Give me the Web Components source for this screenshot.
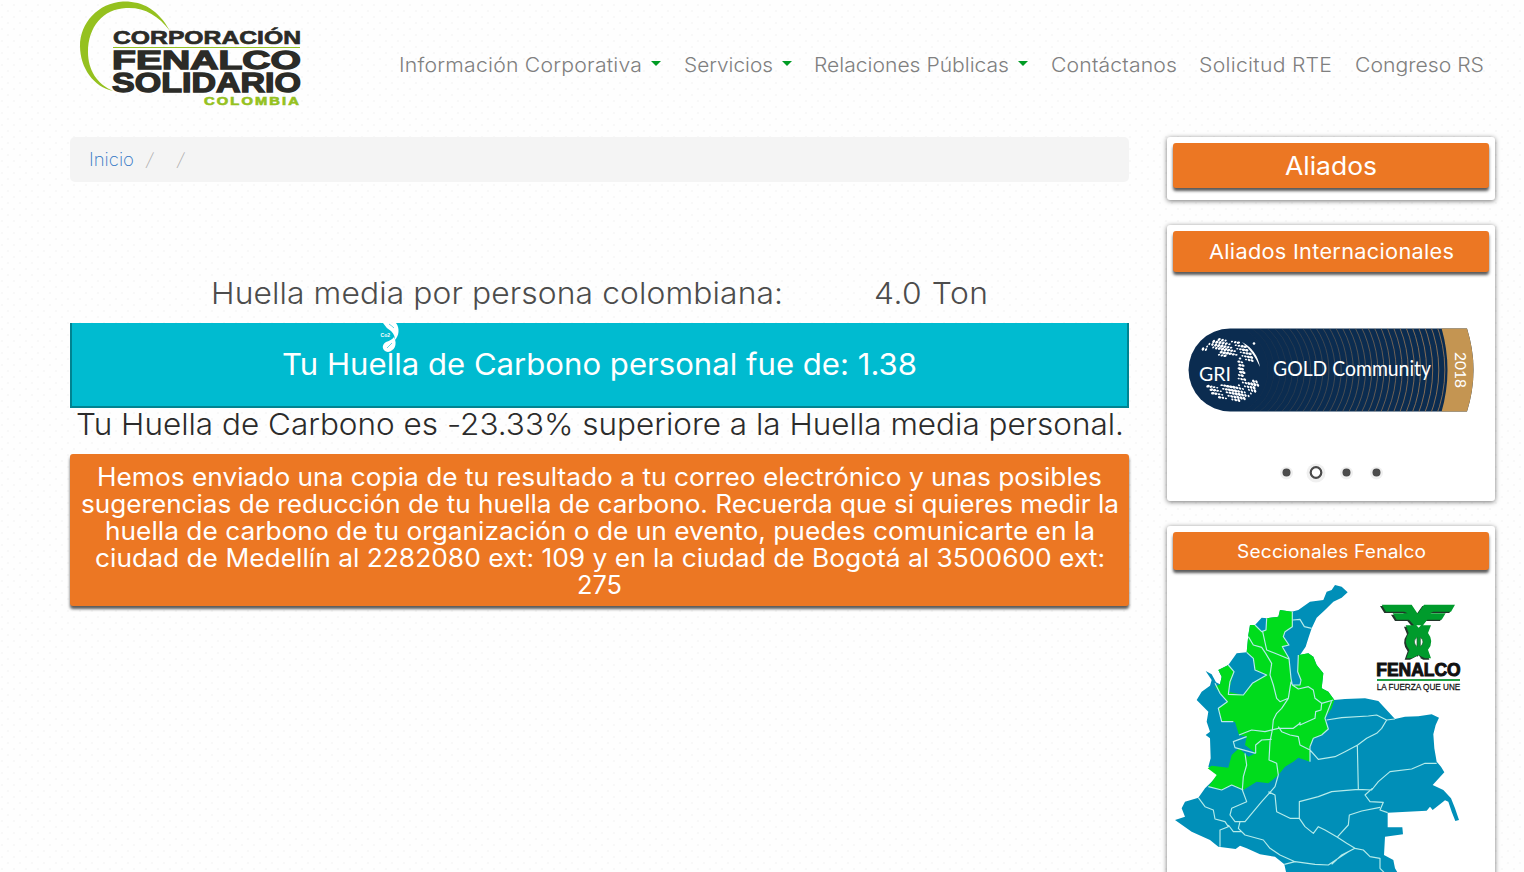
<!DOCTYPE html>
<html lang="es">
<head>
<meta charset="utf-8">
<title>Corporación Fenalco Solidario</title>
<style>
html,body{margin:0;height:872px;overflow:hidden}
body{background-color:#fefefe;background-image:radial-gradient(circle,#f8f8f8 0 .8px,transparent 1.6px),radial-gradient(circle,#f8f8f8 0 .8px,transparent 1.6px);background-size:12px 12px;background-position:-4px -1px,2px 5px;font-family:Inter,"Open Sans",sans-serif;font-weight:300;color:#333}
</style>
</head>
<body>
<fs-page>
  <fs-header slot="header"></fs-header>
  <fs-breadcrumb slot="main"></fs-breadcrumb>
  <fs-result slot="main"></fs-result>
  <fs-card slot="side" size="25" bar="45">
    <fit-text slot="title" w="92">Aliados</fit-text>
    <div style="height:6px"></div>
  </fs-card>
  <fs-card slot="side" size="20.5" bar="41">
    <fit-text slot="title" w="245">Aliados Internacionales</fit-text>
    <fs-slider></fs-slider>
  </fs-card>
  <fs-card slot="side" size="18" bar="38">
    <fit-text slot="title" w="189">Seccionales Fenalco</fit-text>
    <fs-map></fs-map>
  </fs-card>
</fs-page>
<script>
const define = (name, html, init) => customElements.define(name, class extends HTMLElement {
  connectedCallback() {
    if (this.shadowRoot) return;
    const root = this.attachShadow({mode: 'open'});
    root.innerHTML = html;
    if (init) init.call(this, root);
  }
});

// Text widened and tracked so that it spans a given measure
define('fit-text', `<style>:host{display:inline-block;white-space:nowrap;text-align:left}span{display:inline-block;transform-origin:0 50%}</style><span><slot></slot></span>`, function (root) {
  const w = +this.getAttribute('w'), s = root.querySelector('span');
  this.adjust = () => {
    s.style.letterSpacing = '0';
    s.style.transform = 'none';
    const n = this.textContent.length, natural = s.getBoundingClientRect().width;
    const k = Math.max(1, Math.min(1.06, w / natural));
    s.style.letterSpacing = ((w / k - natural) / (n - 1)) + 'px';
    s.style.transform = `scaleX(${k})`;
    this.style.width = w + 'px';
  };
  this.adjust();
});

define('fs-logo', `<style>:host{display:block;width:240px;height:120px}svg{display:block}text{font-family:"Liberation Sans",Arial,sans-serif;font-weight:700;fill:#2b2b27;stroke:#2b2b27;stroke-width:.6}.heavy{stroke-width:1.3}.green{fill:#95c11f;stroke:#95c11f;letter-spacing:1.500px}</style>
<svg width="240" height="120" viewBox="0 0 240 120">
<path fill="#95c11f" d="M100 31C88 9 72 1 53 1.500C28 3 10 23 10 46C10 68 24 87 43 91C27 84 18 70 18 52C18 27 33 9 56 8C74 7 88 15 100 31Z"/>
<text x="43" y="44.300" font-size="17.500" textLength="188" lengthAdjust="spacingAndGlyphs">CORPORACIÓN</text>
<text class="heavy" x="42" y="69" font-size="26" textLength="189" lengthAdjust="spacingAndGlyphs">FENALCO</text>
<text class="heavy" x="42" y="92" font-size="27" textLength="189" lengthAdjust="spacingAndGlyphs">SOLIDARIO</text>
<path d="M43 47.500H230" stroke="#95c11f" stroke-width="1.200"/>
<text class="green" x="134" y="105" font-size="10.500" textLength="97" lengthAdjust="spacingAndGlyphs">COLOMBIA</text>
</svg>`);

define('fs-nav-item', `<style>:host{display:flex;align-items:center;color:#808080;font-size:20px}i{display:none;margin-left:9px;border:5px solid transparent;border-top-color:#009b24;border-bottom:0;margin-top:-3px}:host([menu]) i{display:block}</style><slot></slot><i></i>`);

define('fs-header', `<style>:host{display:flex;height:137px;padding-left:70px}nav{display:flex;margin-left:89px;margin-top:53px;height:24px;gap:22.500px}</style>
<fs-logo></fs-logo><nav>
<fs-nav-item menu><fit-text w="243">Información Corporativa</fit-text></fs-nav-item>
<fs-nav-item menu><fit-text w="89">Servicios</fit-text></fs-nav-item>
<fs-nav-item menu><fit-text w="195">Relaciones Públicas</fit-text></fs-nav-item>
<fs-nav-item><fit-text w="126">Contáctanos</fit-text></fs-nav-item>
<fs-nav-item><fit-text w="133">Solicitud RTE</fit-text></fs-nav-item>
<fs-nav-item><fit-text w="129">Congreso RS</fit-text></fs-nav-item>
</nav>`);

define('fs-breadcrumb', `<style>:host{display:flex;align-items:center;box-sizing:border-box;height:45px;background:#f4f4f4;border-radius:5px;padding-left:19px;font-size:18px;font-weight:200;color:#aaa}a{color:#2f74c4}span{margin-left:13px;transform:skewX(-12deg)}span+span{margin-left:25px}</style>
<a><fit-text w="45">Inicio</fit-text></a><span>/</span><span>/</span>`);

define('fs-result', `<style>
:host{display:block;font-size:30px}
.avg{display:flex;margin-top:91px;height:50px;padding-left:141px;gap:91px;line-height:40px;color:#4c4c4c}
.mine{position:relative;box-sizing:border-box;height:85px;background:#00bbd0;border:2px solid #008391;border-top:0;display:flex;align-items:center;justify-content:center;color:#fff;font-weight:400;padding-bottom:2px}
.mine svg{position:absolute;left:302px;top:0}
.diff{height:47px;line-height:34px;margin-top:-1px;padding-left:6px;color:#2b2b2b}
.note{box-sizing:border-box;height:152px;padding-top:10px;display:flex;flex-direction:column;align-items:center;background:#ec7723;border-radius:3px;box-shadow:0 3px 3px rgba(0,0,0,.65);color:#fff;font-size:25px;line-height:27px;font-weight:400}
</style>
<div class="avg"><fit-text w="572">Huella media por persona colombiana:</fit-text><fit-text w="114">4.0 Ton</fit-text></div>
<div class="mine"><svg width="30" height="32" viewBox="0 0 30 32"><path fill="#fff" d="M9 0H22C26 5 25 13 21 17C21 14 20 11 17 8Q12 5 9 0ZM20 14C24 22 20 28 14 29C8 28 7 22 12 19Q18 17 20 14Z"/><path d="M15 1Q18 3 20 5M13 25L18 20" fill="none" stroke="#00bbd0" stroke-width=".6"/><text x="6.500" y="13.800" font-family="Liberation Sans,sans-serif" font-size="5" font-weight="700" fill="#fff" textLength="9.500">Co2</text></svg><fit-text w="635">Tu Huella de Carbono personal fue de: 1.38</fit-text></div>
<div class="diff"><fit-text w="1048">Tu Huella de Carbono es -23.33% superiore a la Huella media personal.</fit-text></div>
<div class="note">
<fit-text w="1005">Hemos enviado una copia de tu resultado a tu correo electrónico y unas posibles</fit-text>
<fit-text w="1038">sugerencias de reducción de tu huella de carbono. Recuerda que si quieres medir la</fit-text>
<fit-text w="990">huella de carbono de tu organización o de un evento, puedes comunicarte en la</fit-text>
<fit-text w="1010">ciudad de Medellín al 2282080 ext: 109 y en la ciudad de Bogotá al 3500600 ext:</fit-text>
<fit-text w="45">275</fit-text>
</div>`);

define('fs-card', `<style>:host{display:block;box-sizing:border-box;width:328px;padding:6px;background:#fff;border-radius:3px;box-shadow:0 1px 5px rgba(0,0,0,.55);overflow:hidden}
.bar{display:flex;align-items:center;justify-content:center;background:#ec7723;border-radius:3px;box-shadow:0 3px 3px rgba(0,0,0,.65);color:#fff;font-weight:400}</style><div class="bar"><slot name="title"></slot></div><slot></slot>`, function (root) {
  const bar = root.querySelector('.bar');
  bar.style.height = this.getAttribute('bar') + 'px';
  bar.style.fontSize = this.getAttribute('size') + 'px';
  this.querySelector('fit-text').adjust?.();
});

define('fs-slider', `<style>:host{display:block;height:223px}svg{display:block}text{font-family:Lato,sans-serif;font-weight:400;fill:#fff}</style>
<svg width="316" height="223" viewBox="1173 272 316 223">
<defs><clipPath id="c"><path d="M1230 328.500H1467Q1480 370 1467 411.500H1230A41.500 41.500 0 0 1 1230 328.500Z"/></clipPath></defs>
<g clip-path="url(#c)"><path fill="#0b2c50" d="M1188 328h300v84h-300z"/><g id="rings" fill="none" stroke="#b98a5a"></g><path fill="#c49552" d="M1441.500 328Q1453.500 370 1441.500 412H1490V328Z"/></g>
<g id="globe" fill="#fff"></g>
<text x="1199" y="381" font-size="19" textLength="32" lengthAdjust="spacingAndGlyphs">GRI</text>
<text x="1273" y="376" font-size="20.500" textLength="158" lengthAdjust="spacingAndGlyphs">GOLD Community</text>
<text transform="translate(1454.500 352) rotate(90)" font-size="14.500" textLength="36" lengthAdjust="spacingAndGlyphs">2018</text>
<g fill="#4b4b4b"><g fill="#f0f0f0"><circle cx="1286.500" cy="473" r="6.500"/><circle cx="1316" cy="473" r="9.500"/><circle cx="1346.500" cy="473" r="6.500"/><circle cx="1376.500" cy="473" r="6.500"/></g><circle cx="1286.500" cy="472.500" r="4"/><circle cx="1346.500" cy="472.500" r="4"/><circle cx="1376.500" cy="472.500" r="4"/><circle cx="1316" cy="472.500" r="5.300" fill="#fff" stroke="#4b4b4b" stroke-width="2.200"/></g>
</svg>`, function (root) {
  let rings = '';
  for (let x = 1268; x < 1445; x += 6.1) {
    const r = 48 + (x - 1270) * .45;
    rings += `<path d="M${x - r} ${370 - r}A${r} ${r} 0 0 1 ${x - r} ${370 + r}" opacity="${Math.min(.7, Math.max(.03, (x - 1260) / 240)).toFixed(2)}"/>`;
  }
  root.querySelector('#rings').innerHTML = rings;
  let dots = '';
  for (let j = -9; j <= 9; j++) for (let i = -9; i <= 9; i++) {
    const u = i / 9.5, v = j / 9.5;
    if (u * u + v * v > 1) continue;
    const h = Math.abs(Math.sin(i * 12.9 + j * 78.2)), g = Math.sin(i * 37.7 + j * 19.3);
    const x = 1229 + 28 * u * (1 + .1 * v * v) + (j % 2) + g, y = 370 + 31 * v + u * 5 + g * .6;
    if (x < 1238 && y > 356 && y < 385 || x > 1245 && y > 362 && y < 381 || x < 1219 && y > 350 && y < 386) continue;
    if (h < .2) continue;
    dots += `<ellipse cx="${x.toFixed(1)}" cy="${y.toFixed(1)}" rx="${(.8 + h * 1.1).toFixed(1)}" ry="${(.6 + h * .7).toFixed(1)}" transform="rotate(${(u * 50 + v * 30).toFixed(0)} ${x} ${y})"/>`;
  }
  root.querySelector('#globe').innerHTML = dots + '<path d="M1242 342Q1257 350 1260 367Q1254 353 1242 342Z"/><circle cx="1254" cy="343.500" r="1.300"/>';
});

define('fs-map', `<style>:host{display:block;height:310px}svg{display:block;margin:5px 0 0 -6px}text{font-family:"Liberation Sans",Arial,sans-serif;fill:#111;stroke:#111}</style>
<svg width="328" height="300" viewBox="6 0 984 900">
<path fill="#008fb8" d="M510 30L530 35 548 52 530 68 505 80 480 105 455 128 440 160 430 190 422 215 405 240 430 235 445 245 455 270 475 295 470 340 490 350 508 375 540 372 600 370 640 378 665 405 690 432 720 425 760 424 800 418 822 428 812 450 805 478 808 520 815 560 828 575 838 592 803 630 835 645 858 670 870 700 882 735 871 738 860 710 850 680 840 676 803 705 795 695 785 707 668 713 668 757 712 757 714 778 660 785 657 840 685 855 690 880 702 900H365L358 868 330 845 285 838 245 820 225 812 212 822 160 815 135 795 80 770 30 735 60 725 50 700 60 680 100 668 120 640 140 620 160 600 150 585 130 575 137 550 135 490 122 480 135 470 125 440 130 410 95 375 110 350 135 332 140 315 122 288 140 298 153 322 165 328 170 305 160 285 190 270 215 235 245 232 250 180 255 150 270 150 290 128 305 130 340 125 345 105 380 110 400 105 435 80 475 75 485 50 500 45Z"/>
<path fill="#00dc1c" d="M305 130L340 125 345 105 382 110 384 155 360 170 355 185 372 210 352 215 372 250 378 310 382 330 405 330 408 315 398 290 400 240 430 235 445 245 455 270 475 295 470 340 490 350 508 375 500 400 480 430 490 462 470 480 445 490 435 515 435 560 400 548 385 560 360 575 340 600 310 625 275 620 235 645 200 630 170 645 130 635 155 600 128 580 140 572 190 578 200 540 222 520 250 545 272 535 240 510 245 485 222 480 210 441 170 440 160 400 187 380 150 335 165 328 170 305 160 285 190 270 207 290 190 350 235 360 262 325 305 300 270 285 265 250 245 232 250 180 255 150 270 150 290 170 303 165Z"/>
<path fill="none" stroke="#b5ebea" stroke-width="3.500" stroke-linejoin="round" d="M382 110V155L360 170 355 185 372 210 352 215 372 250 378 310 382 330 405 330 408 315 398 290 400 240M384 135L405 133 418 155 440 160M305 130L303 165 290 170 270 150M250 185L265 210 290 217 302 235 320 265 315 300 325 330 335 370 345 380 370 370 378 320M293 170L305 225 330 235 372 252M245 232L265 250 270 285 305 300 262 325 235 360 190 358 195 320 207 290 190 270M150 325L165 355 187 380 160 400 170 440 205 440M382 330L400 342 430 335 445 345 450 370 470 385 505 375M470 385L468 405 452 410 450 430 405 450 405 441M370 370L350 400 335 415 325 435 322 465 315 500 312 555 335 565 340 600M500 378L480 430 490 462 470 480 445 490 435 515V560M485 435L530 428 610 423 635 420 665 435 690 432M665 435L650 460 635 475 605 490 578 510 540 530 510 545 460 553 435 525 405 510 400 485 375 480 350 470 340 455M222 480L260 465 300 470 340 460 385 460 405 445M272 535V510L290 495 320 493M245 485L205 500 210 518 272 535M240 535L245 570 235 605 232 645 245 680 200 700 195 720 210 740 240 740 290 680 330 635 340 600M130 635L170 645 200 630 235 645M100 668L120 695 145 705 150 732 180 740 190 755 165 765 165 815M190 750L205 770 230 770M225 740L220 760 240 780 295 795 315 820 345 840 390 860 450 868 490 870 520 850 550 830 570 820 545 805 515 785 480 765 460 755 445 775 420 755 403 730V680L460 665 500 650 580 643 620 645 640 620 675 590 740 582 780 565 815 565M577 510L580 643M310 650L330 660 335 710 375 730 403 730M622 640L600 660 615 680 655 682 645 705 668 713M645 697L590 708 553 720 550 750 518 785M570 820L595 825 615 845 645 850 645 880 665 900M570 820L530 840 500 868M358 868L390 860"/>
<g id="emblem"><g transform="translate(-5 4)" fill="#22352a"><path d="M650 89H740L758 116 777 89H870L858 110H805L795 115H842L830 134H787L774 151H798L789 174Q809 200 789 224L798 250H780L760 240 740 250H724L733 225Q713 200 731 174L722 151H747L732 134H695L683 115H728L718 110H663Z"/></g><path fill="#009b2c" d="M650 89H740L758 116 777 89H870L858 110H805L795 115H842L830 134H787L774 151H798L789 174Q809 200 789 224L798 250H780L760 240 740 250H724L733 225Q713 200 731 174L722 151H747L732 134H695L683 115H728L718 110H663Z"/><path d="M756 187Q740 201 756 215ZM766 187Q782 201 766 215Z" fill="#fff" stroke="#205b31" stroke-width="2"/><path d="M754 151L761 158 768 151ZM754 250L761 241 768 250Z" fill="#fff"/></g>
<text x="634" y="303" font-size="54" font-weight="700" stroke-width="3" textLength="253" lengthAdjust="spacingAndGlyphs">FENALCO</text><path d="M636 315H885" stroke="#20a044" stroke-width="6"/>
<text x="635" y="345" font-size="29" font-weight="400" stroke-width=".8" textLength="251" lengthAdjust="spacingAndGlyphs">LA FUERZA QUE UNE</text>
</svg>`);

define('fs-page', `<style>:host{display:block;width:1524px;height:872px;overflow:hidden}.cols{display:grid;grid-template-columns:1059px 328px;column-gap:38px;padding-left:70px}aside{display:flex;flex-direction:column;gap:25px}</style><slot name="header"></slot><div class="cols"><main><slot name="main"></slot></main><aside><slot name="side"></slot></aside></div>`);
</script>
</body>
</html>
